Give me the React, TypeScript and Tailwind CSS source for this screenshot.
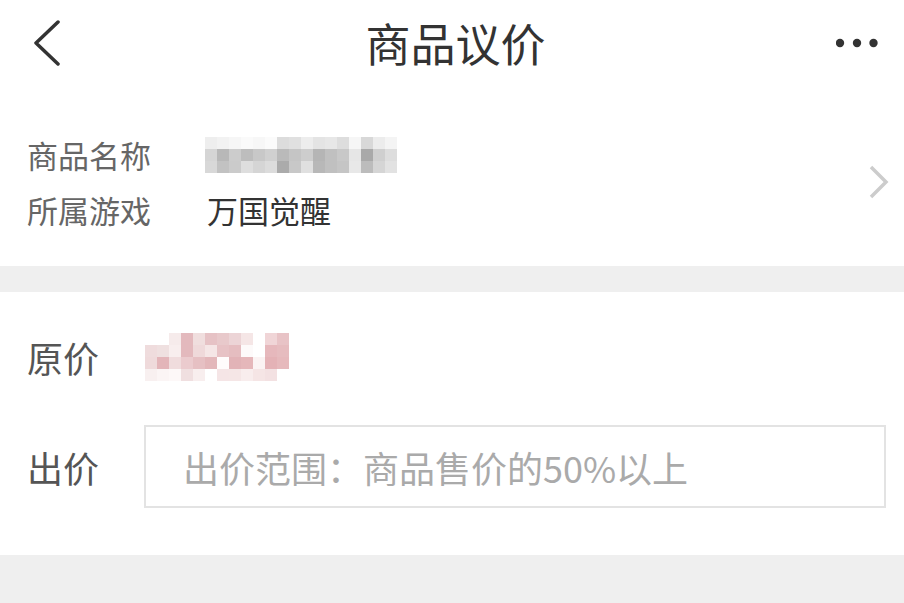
import React from "react";

const nameMosaic: string[][] = [
  ["#eeeeee", "#f2f2f2", "#f6f6f6", "#fafafa", "#f7f7f7", "#fbfbfb", "#dcdcdc", "#e0e0e0", "#ededed", "#e4e4e4", "#e7e7e7", "#dddddd", "#f6f6f6", "#d8d8d8", "#ececec", "#f4f4f4"],
  ["#d5d5d5", "#b8b8b8", "#cccccc", "#bdbdbd", "#c8c8c8", "#d0d0d0", "#bababa", "#c5c5c5", "#cdcdcd", "#b5b5b5", "#c0c0c0", "#c8c8c8", "#e6e6e6", "#a9a9a9", "#cfcfcf", "#dddddd"],
  ["#d8d8d8", "#c2c2c2", "#cbcbcb", "#dedede", "#d5d5d5", "#dcdcdc", "#ababab", "#c8c8c8", "#e0e0e0", "#b8b8b8", "#c0c0c0", "#c5c5c5", "#e8e8e8", "#bcbcbc", "#d5d5d5", "#e2e2e2"],
];

const priceMosaic: string[][] = [
  ["#ffffff", "#ffffff", "#f6ebeb", "#e3b9bd", "#f0dede", "#e6c2c5", "#e8c9cb", "#ecd4d6", "#f5e6e6", "#ffffff", "#f0d5d7", "#e8c3c6"],
  ["#efdcdd", "#efe0e0", "#f8eeee", "#e3b9bd", "#efd9da", "#f5e6e6", "#e7c2c5", "#e5bdc0", "#fdfafa", "#ffffff", "#e6b8bc", "#e6bcbf"],
  ["#efdadb", "#e3b5b9", "#f0dcdd", "#ebcbce", "#e6c0c3", "#e3b7ba", "#fffcfc", "#e2b3b7", "#e5b7ba", "#fbf3f3", "#e4b2b6", "#e6b9bc"],
  ["#f8f0f0", "#fbf5f5", "#fdf8f8", "#f0dfe0", "#f8eeee", "#ffffff", "#f5e5e6", "#f5e6e6", "#f8eded", "#f5e5e5", "#f3e1e2", "#ffffff"],
];

function Mosaic({ data }: { data: string[][] }) {
  return (
    <div className="flex flex-col">
      {data.map((row, r) => (
        <div key={r} className="flex">
          {row.map((c, i) => (
            <div key={i} className="w-[12px] h-[12px]" style={{ backgroundColor: c }} />
          ))}
        </div>
      ))}
    </div>
  );
}

export default function App() {
  return (
    <div className="w-[904px] h-[603px] bg-[#efefef] font-['Noto_Sans_CJK_SC',sans-serif] overflow-hidden">
      {/* 顶部 + 商品信息 */}
      <div className="bg-white">
        <header className="h-[86px] grid grid-cols-[1fr_auto_1fr] items-center pl-[33px] pr-[26px]">
          <svg width="28" height="46" viewBox="0 0 28 46" className="justify-self-start">
            <path d="M25 2 L3 23 L25 44" fill="none" stroke="#333" strokeWidth="3.5" strokeLinecap="round" strokeLinejoin="round" />
          </svg>
          <h1 className="text-[45px] leading-none text-[#333] font-normal -mt-[2px]">商品议价</h1>
          <svg width="42" height="10" viewBox="0 0 42 10" className="justify-self-end">
            <circle cx="4" cy="5" r="4.2" fill="#333" />
            <circle cx="21" cy="5" r="4.2" fill="#333" />
            <circle cx="37.5" cy="5" r="4.2" fill="#333" />
          </svg>
        </header>

        <div className="flex items-center pl-[27px] pr-[13px] pt-[41px] pb-[29px]">
          <div className="flex-1 flex flex-col text-[31px] leading-none">
            <div className="h-[55px] flex items-center">
              <span className="w-[178px] text-[#666]">商品名称</span>
              <Mosaic data={nameMosaic} />
            </div>
            <div className="h-[55px] flex items-center">
              <span className="w-[180px] text-[#666]">所属游戏</span>
              <span className="text-[#333]">万国觉醒</span>
            </div>
          </div>
          <svg width="24" height="36" viewBox="0 0 24 36">
            <path d="M4 3 L19 18 L4 33" fill="none" stroke="#cccccc" strokeWidth="3.5" />
          </svg>
        </div>
      </div>

      {/* 议价 */}
      <div className="bg-white mt-[26px] pl-[27px] pr-[18px] pt-[35px] pb-[47px]">
        <div className="h-[60px] flex items-center text-[36px] leading-none">
          <span className="w-[118px] text-[#555]">原价</span>
          <Mosaic data={priceMosaic} />
        </div>
        <div className="mt-[38px] flex items-center">
          <span className="w-[117px] text-[36px] leading-none text-[#555]">出价</span>
          <input
            className="flex-1 h-[83px] border-2 border-[#e3e3e3] bg-white pl-[37px] text-[36px] text-[#333] outline-none placeholder:text-[#aaaaaa]"
            placeholder="出价范围：商品售价的50%以上"
          />
        </div>
      </div>
    </div>
  );
}
